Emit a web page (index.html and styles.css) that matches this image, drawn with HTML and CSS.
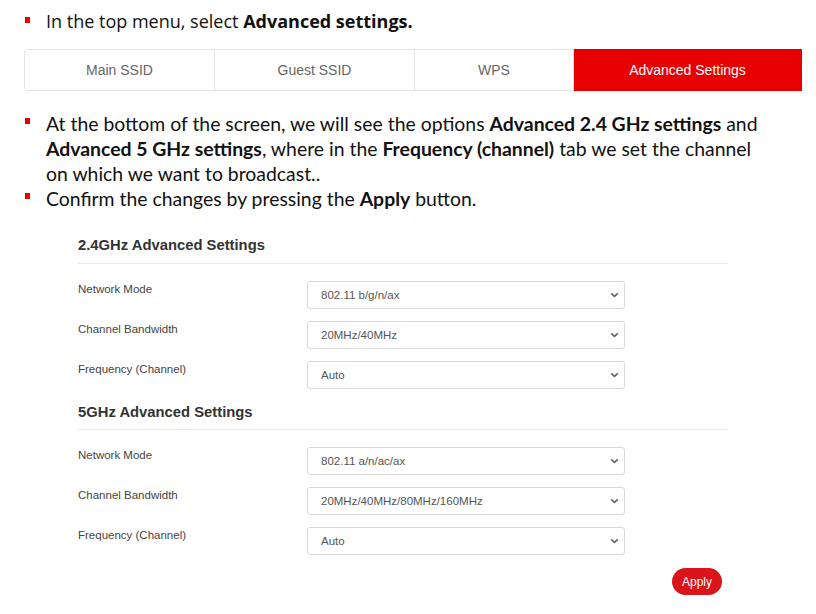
FILE: index.html
```html
<!DOCTYPE html>
<html lang="en">
  <head>
    <meta charset="UTF-8" />
    <meta name="viewport" content="width=device-width, initial-scale=1.0" />
    <title>Advanced settings</title>
    <link rel="stylesheet" href="styles.css">
  </head>
  <body>
    <!-- Bước 1 -->
    <ul class="steps step-top">
      <li>In the top menu, select <b>Advanced settings.</b></li>
    </ul>

    <div class="tabs">
      <div class="tab tab-main">Main SSID</div>
      <div class="tab tab-guest">Guest SSID</div>
      <div class="tab tab-wps">WPS</div>
      <div class="tab tab-adv active">Advanced Settings</div>
    </div>

    <!-- Bước 2, 3 -->
    <ul class="steps step-text">
      <li>At the bottom of the screen, we will see the options <b>Advanced 2.4 GHz settings</b> and <b>Advanced 5 GHz settings</b>, where in the <b>Frequency (channel)</b> tab we set the channel on which we want to broadcast..</li>
      <li>Confirm the changes by pressing the <b>Apply</b> button.</li>
    </ul>

    <!-- Bảng cài đặt -->
    <div class="panel">
      <h3 class="panel-title">2.4GHz Advanced Settings</h3>
      <div class="row">
        <label>Network Mode</label>
        <div class="select-box">
          <select class="select"><option>802.11 b/g/n/ax</option></select>
          <svg class="chev" width="9" height="6" viewBox="0 0 9 6"><path d="M1.2 1.3 L4.5 4.3 L7.8 1.3" fill="none" stroke="#666" stroke-width="1.7"/></svg>
        </div>
      </div>
      <div class="row">
        <label>Channel Bandwidth</label>
        <div class="select-box">
          <select class="select"><option>20MHz/40MHz</option></select>
          <svg class="chev" width="9" height="6" viewBox="0 0 9 6"><path d="M1.2 1.3 L4.5 4.3 L7.8 1.3" fill="none" stroke="#666" stroke-width="1.7"/></svg>
        </div>
      </div>
      <div class="row">
        <label>Frequency (Channel)</label>
        <div class="select-box">
          <select class="select"><option>Auto</option></select>
          <svg class="chev" width="9" height="6" viewBox="0 0 9 6"><path d="M1.2 1.3 L4.5 4.3 L7.8 1.3" fill="none" stroke="#666" stroke-width="1.7"/></svg>
        </div>
      </div>

      <h3 class="panel-title title-5g">5GHz Advanced Settings</h3>
      <div class="row">
        <label>Network Mode</label>
        <div class="select-box">
          <select class="select"><option>802.11 a/n/ac/ax</option></select>
          <svg class="chev" width="9" height="6" viewBox="0 0 9 6"><path d="M1.2 1.3 L4.5 4.3 L7.8 1.3" fill="none" stroke="#666" stroke-width="1.7"/></svg>
        </div>
      </div>
      <div class="row">
        <label>Channel Bandwidth</label>
        <div class="select-box">
          <select class="select"><option>20MHz/40MHz/80MHz/160MHz</option></select>
          <svg class="chev" width="9" height="6" viewBox="0 0 9 6"><path d="M1.2 1.3 L4.5 4.3 L7.8 1.3" fill="none" stroke="#666" stroke-width="1.7"/></svg>
        </div>
      </div>
      <div class="row">
        <label>Frequency (Channel)</label>
        <div class="select-box">
          <select class="select"><option>Auto</option></select>
          <svg class="chev" width="9" height="6" viewBox="0 0 9 6"><path d="M1.2 1.3 L4.5 4.3 L7.8 1.3" fill="none" stroke="#666" stroke-width="1.7"/></svg>
        </div>
      </div>

      <div class="btn-row">
        <button class="btn-apply">Apply</button>
      </div>
    </div>
  </body>
</html>
```

FILE: styles.css
```css
* {
    margin: 0;
    padding: 0;
    box-sizing: border-box;
}

body {
    background: #fff;
    color: #111;
    padding-top: 8px;
    font-family: "Open Sans", Arial, sans-serif;
}

/* danh sách các bước */
.steps {
    list-style: none;
}

.steps li {
    position: relative;
    padding-left: 46px;
    padding-right: 48px;
}

.steps li::before {
    content: "";
    position: absolute;
    left: 25px;
    width: 5px;
    height: 6px;
    background: #e60000;
}

.step-top li {
    font-size: 18px;
    line-height: 26px;
}

.step-top li::before {
    top: 9px;
}

.step-text {
    margin-top: 20px;
}

.step-text li {
    font-family: Lato, "Open Sans", sans-serif;
    font-size: 19.4px;
    line-height: 25px;
}

.step-text li::before {
    top: 7px;
}

/* thanh menu */
.tabs {
    display: flex;
    margin: 15px 14px 0 24px;
    height: 42px;
    font-family: "Liberation Sans", Arial, sans-serif;
    font-size: 14px;
    color: #666;
}

.tab {
    display: flex;
    align-items: center;
    justify-content: center;
    border: 1px solid #e4e4e4;
    border-left: none;
    background: #fff;
}

.tab-main {
    width: 191px;
    border-left: 1px solid #e4e4e4;
    border-radius: 3px 0 0 3px;
}

.tab-guest {
    width: 200px;
}

.tab-wps {
    width: 159px;
}

.tab-adv {
    width: 228px;
}

.tab.active {
    background: #e60000;
    border-color: #e60000;
    color: #fff;
}

/* bảng cài đặt */
.panel {
    width: 650px;
    margin: 24px 0 0 78px;
    font-family: "Liberation Sans", Arial, sans-serif;
}

.panel-title {
    font-size: 14.8px;
    font-weight: bold;
    color: #333;
    line-height: 20px;
    padding-bottom: 8px;
    border-bottom: 1px solid #eaeaea;
    margin-bottom: 17px;
}

.title-5g {
    margin-top: 1px;
    padding-bottom: 7px;
}

.row {
    display: flex;
    align-items: flex-start;
    height: 40px;
}

.row label {
    width: 229px;
    font-size: 11.5px;
    line-height: 16px;
    color: #444;
}

.select-box {
    position: relative;
    width: 318px;
}

.select {
    appearance: none;
    -webkit-appearance: none;
    width: 100%;
    height: 28px;
    padding: 0 24px 0 13px;
    border: 1px solid #d9d9d9;
    border-radius: 3px;
    background: #fff;
    font-family: "Liberation Sans", Arial, sans-serif;
    font-size: 11.5px;
    color: #555;
    outline: none;
}

.chev {
    position: absolute;
    right: 6px;
    top: 11px;
}

.btn-row {
    display: flex;
    justify-content: flex-end;
    margin-top: 1px;
    padding-right: 6px;
}

.btn-apply {
    width: 50px;
    height: 27px;
    border: none;
    border-radius: 14px;
    background: #d9141b;
    color: #fff;
    font-family: "Liberation Sans", Arial, sans-serif;
    font-size: 12px;
    cursor: pointer;
}
```
